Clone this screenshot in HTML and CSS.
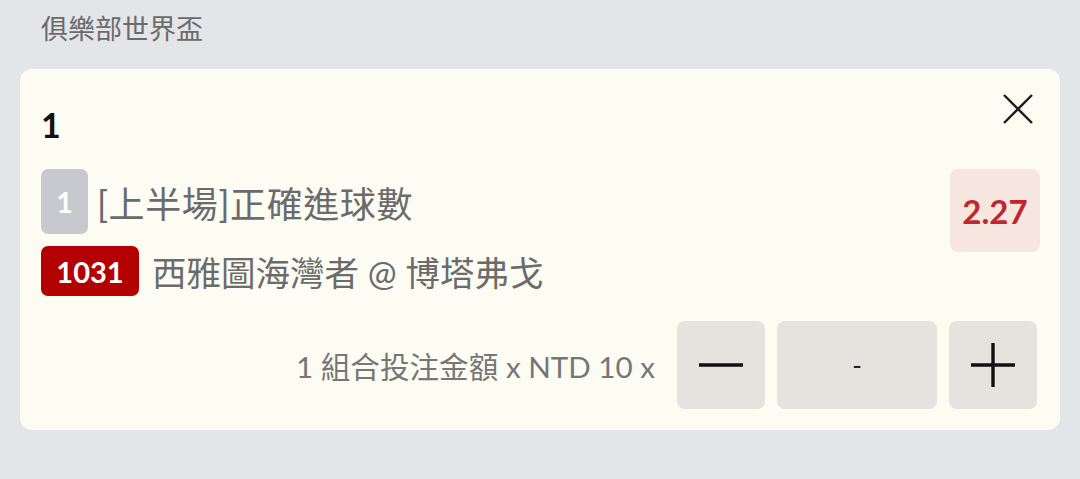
FILE: index.html
```html
<!DOCTYPE html>
<html lang="zh-Hant">
<head>
    <meta charset="UTF-8">
    <meta name="viewport" content="width=device-width, initial-scale=1.0">
    <title>投注單</title>
    <link rel="stylesheet" href="styles.css">
</head>
<body>

    <div class="league">俱樂部世界盃</div>

    <div class="slip">
        <div class="slip-head">
            <div class="slip-no">1</div>
            <button class="close" aria-label="關閉">
                <svg width="30" height="30" viewBox="0 0 30 30">
                    <path d="M1 1 L29 29 M29 1 L1 29" stroke="#1c1c1c" stroke-width="2.4" fill="none"/>
                </svg>
            </button>
        </div>

        <div class="slip-body">
            <div class="lines">
                <div class="line">
                    <span class="tag tag-grey">1</span>
                    <span class="market">[上半場]正確進球數</span>
                </div>
                <div class="line line-match">
                    <span class="tag tag-red">1031</span>
                    <span class="match">西雅圖海灣者 @ 博塔弗戈</span>
                </div>
            </div>
            <div class="odds">2.27</div>
        </div>

        <div class="slip-foot">
            <div class="stake-label">1 組合投注金額 x NTD 10 x</div>
            <div class="stepper">
                <button class="step">
                    <svg width="46" height="46" viewBox="0 0 46 46">
                        <path d="M1 23 H45" stroke="#111" stroke-width="3.4"/>
                    </svg>
                </button>
                <div class="amount">-</div>
                <button class="step">
                    <svg width="46" height="46" viewBox="0 0 46 46">
                        <path d="M1 23 H45 M23 1 V45" stroke="#111" stroke-width="3.4"/>
                    </svg>
                </button>
            </div>
        </div>
    </div>

</body>
</html>
```

FILE: styles.css
```css
body {
    margin: 0;
    padding: 0 20px;
    background: #e4e5e8;
    font-family: "Lato", "Noto Sans CJK TC", sans-serif;
    color: #6b6b6b;
}
.league {
    font-size: 27px;
    line-height: 36px;
    padding: 11px 0 0 21px;
    height: 58px;
    color: #6a6a6a;
}
.slip {
    background: #fcfcf3;
    border-radius: 12px;
    padding: 25px 20px 21px 20px;
}
.slip-head {
    display: flex;
    justify-content: space-between;
    align-items: flex-start;
    height: 75px;
}
.slip-no {
    font-size: 34px;
    font-weight: bold;
    line-height: 41px;
    margin-top: 10px;
    padding-left: 1px;
    color: #111;
}
.close {
    border: none;
    background: none;
    padding: 0;
    margin-right: 7px;
    width: 30px;
    height: 30px;
}
.close svg {
    display: block;
}
.slip-body {
    display: flex;
    justify-content: space-between;
    align-items: flex-start;
}
.line {
    display: flex;
    align-items: center;
}
.line-match {
    margin-top: 12px;
}
.tag {
    display: flex;
    align-items: center;
    justify-content: center;
    border-radius: 7px;
    color: #fff;
}
.tag-grey {
    width: 47px;
    height: 65px;
    margin-left: 1px;
    margin-right: 9px;
    background: #c8c9ce;
    font-size: 28px;
    font-weight: bold;
}
.tag-red {
    width: 98px;
    height: 50px;
    margin-left: 1px;
    margin-right: 13px;
    background: #b30000;
    font-size: 29px;
    font-weight: bold;
}
.market {
    font-size: 36px;
    letter-spacing: 0.6px;
    color: #6b6b6b;
}
.match {
    font-size: 34.5px;
    color: #6b6b6b;
}
.odds {
    width: 90px;
    height: 83px;
    display: flex;
    align-items: center;
    justify-content: center;
    background: #f7e6df;
    border-radius: 8px;
    color: #c0272d;
    font-size: 33px;
    font-weight: bold;
}
.slip-foot {
    display: flex;
    justify-content: flex-end;
    align-items: center;
    margin-top: 25px;
}
.stake-label {
    font-size: 29.6px;
    color: #767676;
    margin-right: 22px;
}
.stepper {
    display: flex;
    gap: 12px;
    margin-right: 3px;
}
.step {
    width: 88px;
    height: 88px;
    border: none;
    border-radius: 8px;
    background: #e5e3dd;
    padding: 0;
    display: flex;
    align-items: center;
    justify-content: center;
}
.amount {
    width: 160px;
    height: 88px;
    border-radius: 8px;
    background: #e5e3dd;
    display: flex;
    align-items: center;
    justify-content: center;
    font-size: 26px;
    color: #222;
}
```
